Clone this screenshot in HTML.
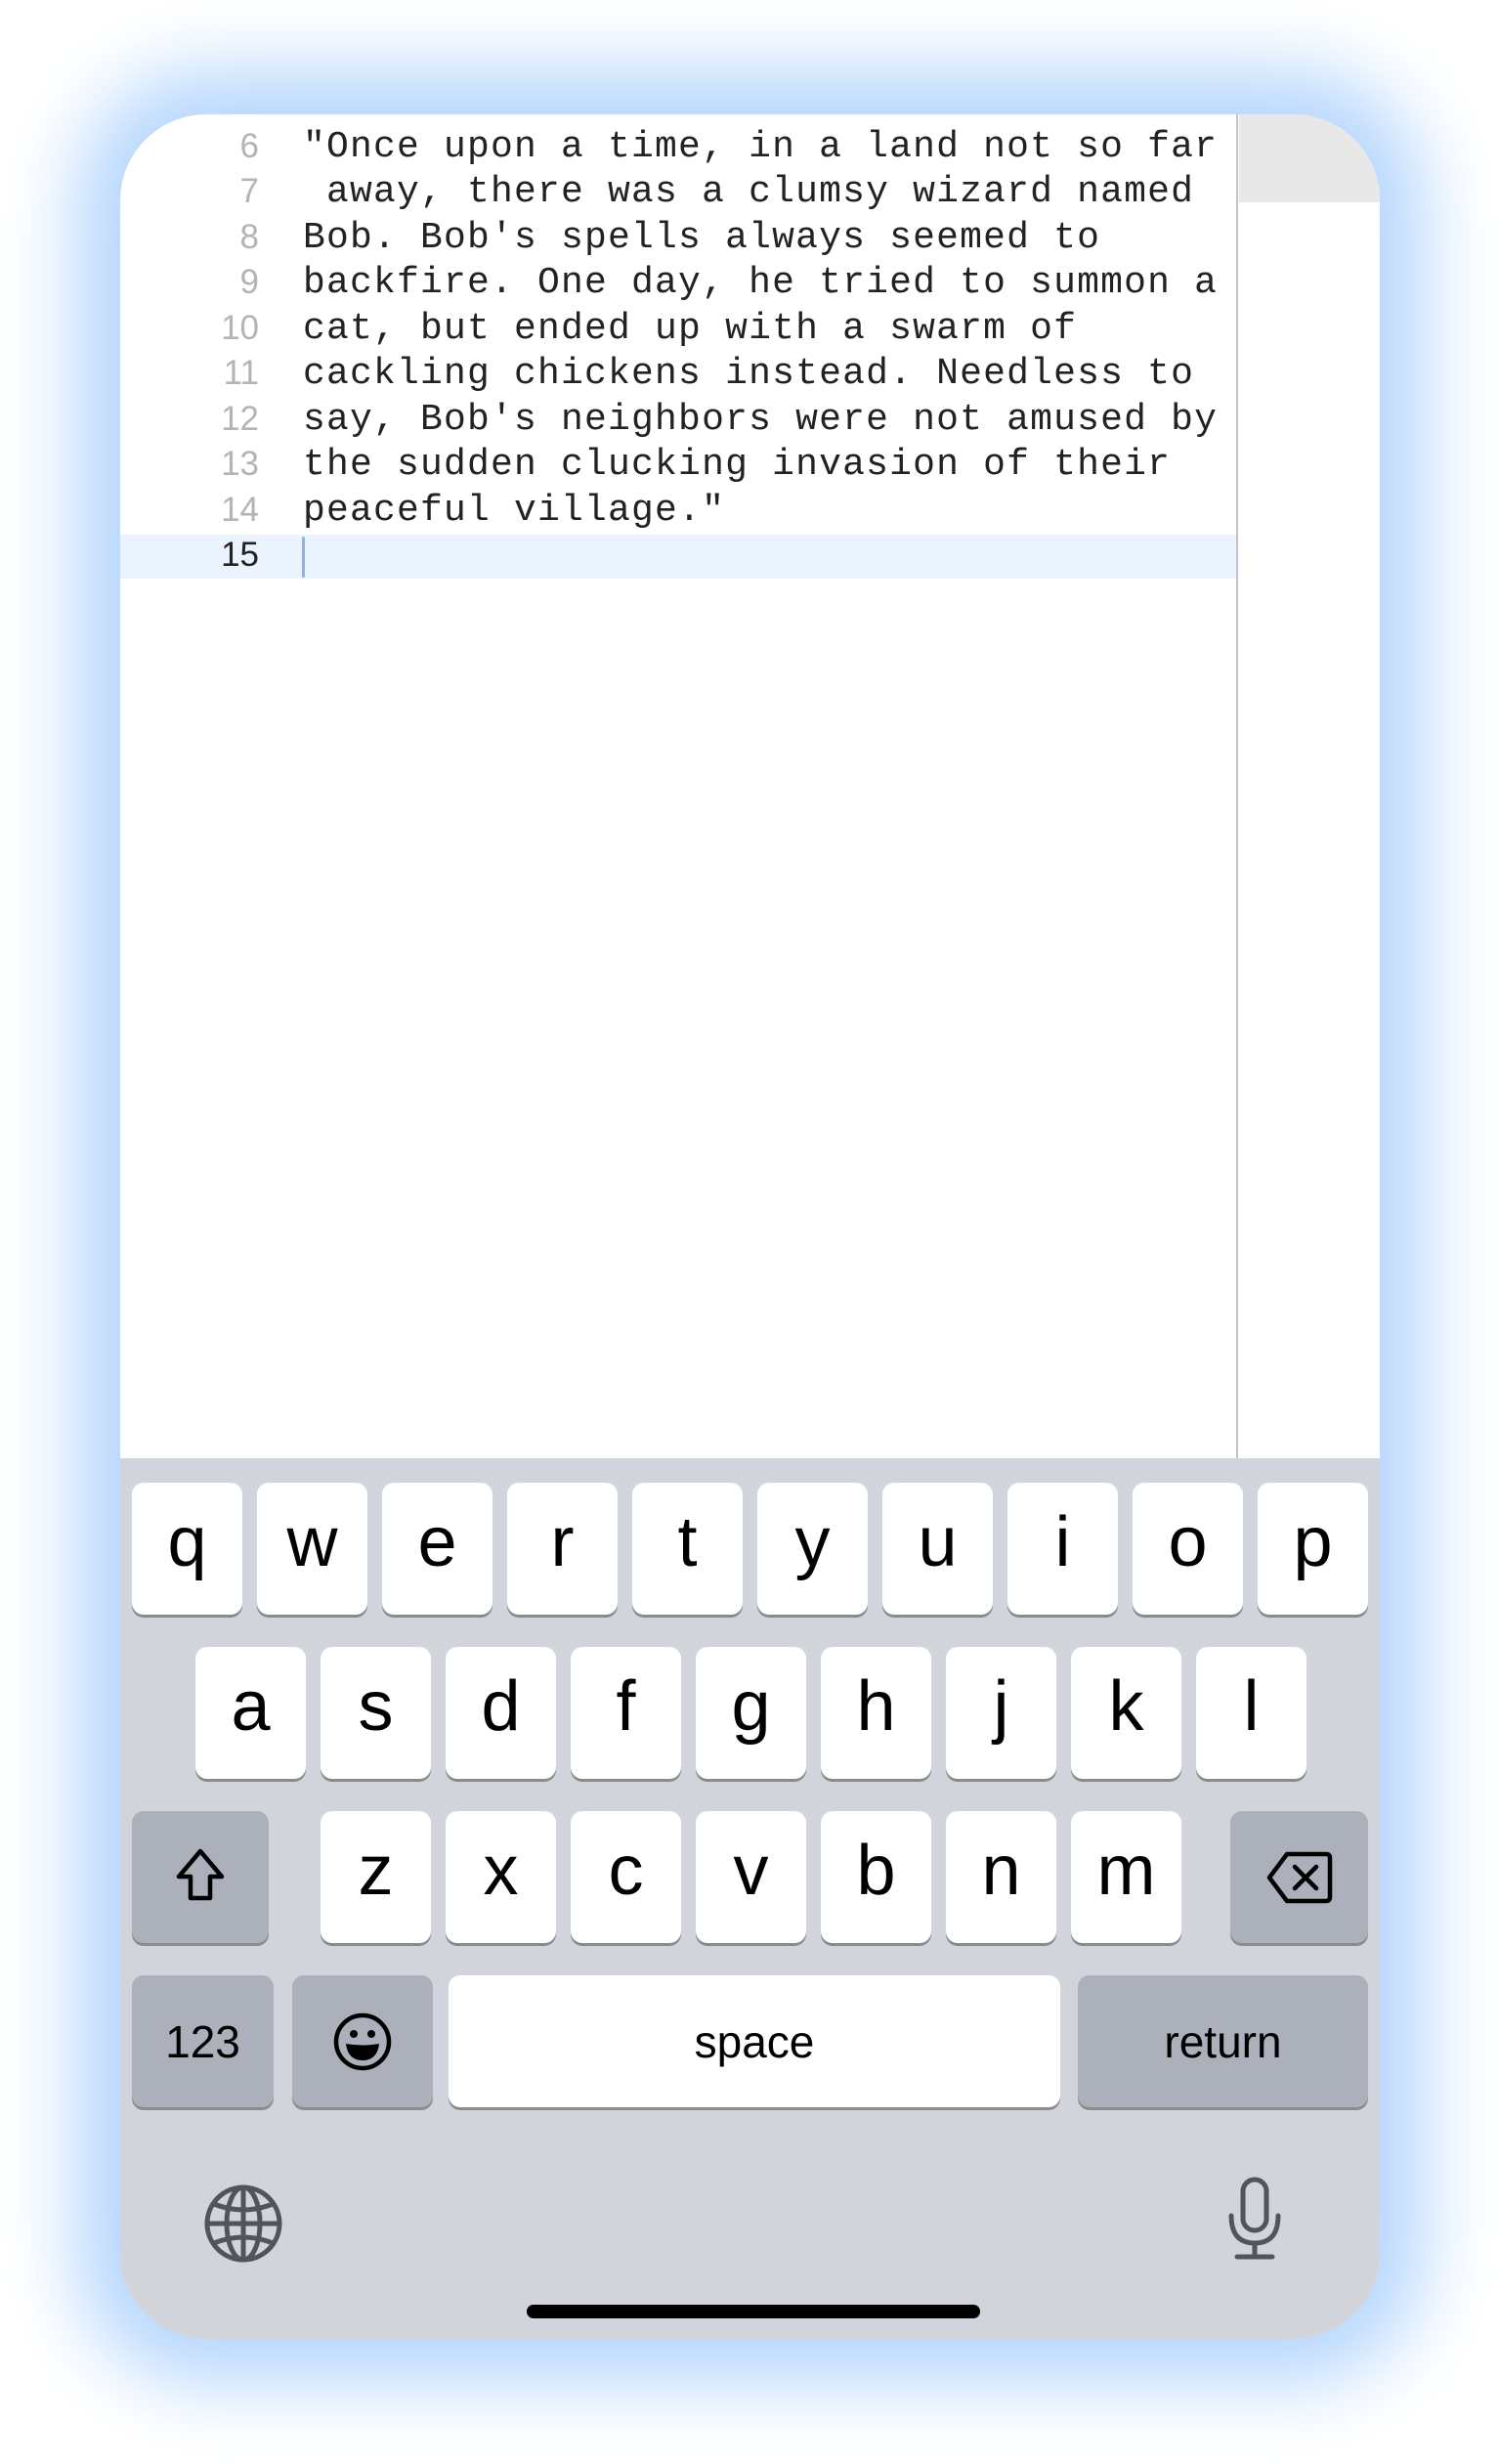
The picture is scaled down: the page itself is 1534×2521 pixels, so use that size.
<!DOCTYPE html>
<html><head><meta charset="utf-8"><style>
*{margin:0;padding:0;box-sizing:border-box}
body{width:1534px;height:2521px;background:#fff;position:relative;overflow:hidden;font-family:"Liberation Sans",sans-serif}
.glow{position:absolute;left:123px;top:117px;width:1289px;height:2276px;border-radius:88px;box-shadow:0 0 80px 45px #b5d6fe;background:#b5d6fe}
.phone{position:absolute;left:123px;top:117px;width:1289px;height:2276px;border-radius:88px;overflow:hidden;background:#fff}
.gray{position:absolute;left:1145px;top:0;width:150px;height:90px;background:#e8e8e8}
.div{position:absolute;left:1142px;top:0;width:2px;height:1380px;background:#c4c4c4}
.hl{position:absolute;left:0;top:430px;width:1142px;height:45px;background:#ebf3fe}
.cur{position:absolute;left:186px;top:432px;width:3px;height:42px;background:#8ab4f0;border-radius:2px}
.ln{position:absolute;left:0;width:142px;text-align:right;font-size:35px;color:#b4b4b4}
.tx{position:absolute;left:187px;font-family:"Liberation Mono",monospace;font-size:38px;letter-spacing:1.2px;color:#222;white-space:pre}
.kb{position:absolute;left:0;top:1375px;width:1289px;height:901px;background:#d1d4da}
.k{position:absolute;height:135px;background:#fff;border-radius:12px;box-shadow:0 3px 0 #898b8f;display:flex;align-items:center;justify-content:center;font-size:72px;color:#000;padding-bottom:14px}
.g{background:#abb0ba}
.s{font-size:46px;padding-bottom:0}
</style></head><body>
<div class="glow"></div>
<div class="phone">
<div class="gray"></div>
<div class="hl"></div>
<div class="div"></div>
<div class="cur"></div>
<div class="ln" style="top:13px">6</div><div class="tx" style="top:12px">"Once upon a time, in a land not so far</div>
<div class="ln" style="top:59px">7</div><div class="tx" style="top:58px"> away, there was a clumsy wizard named</div>
<div class="ln" style="top:106px">8</div><div class="tx" style="top:105px">Bob. Bob's spells always seemed to</div>
<div class="ln" style="top:152px">9</div><div class="tx" style="top:151px">backfire. One day, he tried to summon a</div>
<div class="ln" style="top:199px">10</div><div class="tx" style="top:198px">cat, but ended up with a swarm of</div>
<div class="ln" style="top:245px">11</div><div class="tx" style="top:244px">cackling chickens instead. Needless to</div>
<div class="ln" style="top:292px">12</div><div class="tx" style="top:291px">say, Bob's neighbors were not amused by</div>
<div class="ln" style="top:338px">13</div><div class="tx" style="top:337px">the sudden clucking invasion of their</div>
<div class="ln" style="top:385px">14</div><div class="tx" style="top:384px">peaceful village."</div>
<div class="ln" style="top:431px;color:#222">15</div>
<div class="kb">
<div class="k" style="left:12px;top:25px;width:113px">q</div>
<div class="k" style="left:140px;top:25px;width:113px">w</div>
<div class="k" style="left:268px;top:25px;width:113px">e</div>
<div class="k" style="left:396px;top:25px;width:113px">r</div>
<div class="k" style="left:524px;top:25px;width:113px">t</div>
<div class="k" style="left:652px;top:25px;width:113px">y</div>
<div class="k" style="left:780px;top:25px;width:113px">u</div>
<div class="k" style="left:908px;top:25px;width:113px">i</div>
<div class="k" style="left:1036px;top:25px;width:113px">o</div>
<div class="k" style="left:1164px;top:25px;width:113px">p</div>
<div class="k" style="left:77px;top:193px;width:113px">a</div>
<div class="k" style="left:205px;top:193px;width:113px">s</div>
<div class="k" style="left:333px;top:193px;width:113px">d</div>
<div class="k" style="left:461px;top:193px;width:113px">f</div>
<div class="k" style="left:589px;top:193px;width:113px">g</div>
<div class="k" style="left:717px;top:193px;width:113px">h</div>
<div class="k" style="left:845px;top:193px;width:113px">j</div>
<div class="k" style="left:973px;top:193px;width:113px">k</div>
<div class="k" style="left:1101px;top:193px;width:113px">l</div>
<div class="k g" style="left:12px;top:361px;width:140px;padding:0"><svg width="60" height="70" viewBox="0 0 60 70"><path d="M30 8 L52 34 H40 V56 H20 V34 H8 Z" fill="none" stroke="#000" stroke-width="4.5" stroke-linejoin="round"/></svg></div>
<div class="k" style="left:205px;top:361px;width:113px">z</div>
<div class="k" style="left:333px;top:361px;width:113px">x</div>
<div class="k" style="left:461px;top:361px;width:113px">c</div>
<div class="k" style="left:589px;top:361px;width:113px">v</div>
<div class="k" style="left:717px;top:361px;width:113px">b</div>
<div class="k" style="left:845px;top:361px;width:113px">n</div>
<div class="k" style="left:973px;top:361px;width:113px">m</div>
<div class="k g" style="left:1136px;top:361px;width:141px;padding:0"><svg width="70" height="56" viewBox="0 0 70 56"><path d="M22 4 H62 Q66 4 66 8 V48 Q66 52 62 52 H22 L4 28 Z" fill="none" stroke="#000" stroke-width="4.5" stroke-linejoin="round"/><path d="M30 17 L52 39 M52 17 L30 39" stroke="#000" stroke-width="4.5" stroke-linecap="round"/></svg></div>
<div class="k g s" style="left:12px;top:529px;width:145px">123</div>
<div class="k g" style="left:176px;top:529px;width:144px;padding:0"><svg width="62" height="62" viewBox="0 0 62 62"><circle cx="31" cy="31" r="27" fill="none" stroke="#000" stroke-width="4.5"/><circle cx="22" cy="23" r="4"/><circle cx="40" cy="23" r="4"/><path d="M14 33 Q31 36 48 33 Q46 50 31 50 Q16 50 14 33 Z"/></svg></div>
<div class="k s" style="left:336px;top:529px;width:626px">space</div>
<div class="k g s" style="left:980px;top:529px;width:297px">return</div>
<svg style="position:absolute;left:86px;top:743px" width="80" height="80" viewBox="0 0 80 80" fill="none" stroke="#50555c" stroke-width="5"><circle cx="40" cy="40" r="37"/><ellipse cx="40" cy="40" rx="17" ry="37"/><line x1="40" y1="3" x2="40" y2="77"/><line x1="3" y1="40" x2="77" y2="40"/><path d="M10 20 Q40 32 70 20 M10 60 Q40 48 70 60"/></svg>
<svg style="position:absolute;left:1133px;top:735px" width="56" height="86" viewBox="0 0 56 86" fill="none" stroke="#50555c" stroke-width="5" stroke-linecap="round"><rect x="16" y="3" width="24" height="52" rx="12"/><path d="M4 40 Q4 68 28 68 Q52 68 52 40 M28 68 V82 M10 82 H46"/></svg>
<div style="position:absolute;left:416px;top:866px;width:464px;height:14px;border-radius:7px;background:#000"></div>
</div>
</div>
</body></html>
